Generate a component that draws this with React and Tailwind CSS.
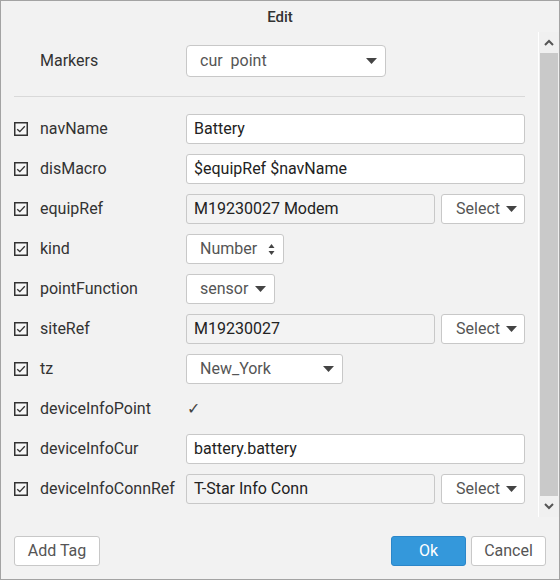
import React from 'react';

const CheckBox = () => (
  <svg width="14" height="14" viewBox="0 0 14 14" className="shrink-0">
    <rect x="0.75" y="0.75" width="12.5" height="12.5" fill="#f7f7f7" stroke="#333" strokeWidth="1.5" />
    <path d="M3.2 7.2 L5.8 9.6 L10.8 4.2" fill="none" stroke="#333" strokeWidth="1.3" />
  </svg>
);

const Caret = () => (
  <svg width="11" height="6" viewBox="0 0 11 6" className="shrink-0">
    <path d="M0 0 L11 0 L5.5 6 Z" fill="#444" />
  </svg>
);

const Spinner = () => (
  <svg width="7" height="13" viewBox="0 0 7 13" className="shrink-0">
    <path d="M0.5 5 L6.5 5 L3.5 1 Z" fill="#444" />
    <path d="M0.5 8 L6.5 8 L3.5 12 Z" fill="#444" />
  </svg>
);

const TextBox = ({ value, readOnly }) => (
  <div className={`flex-1 h-[30px] flex items-center px-[7px] border border-[#c8c8c8] rounded-[3px] text-[16px] text-[#222] ${readOnly ? 'bg-[#f3f3f3]' : 'bg-white'}`}>
    {value}
  </div>
);

const SelectBtn = () => (
  <div className="w-[84px] h-[30px] ml-[6px] flex items-center justify-end gap-[6px] pr-[7px] border border-[#c8c8c8] rounded-[3px] bg-white text-[16px] text-[#555]">
    <span>Select</span>
    <Caret />
  </div>
);

const Dropdown = ({ value, width, icon }) => (
  <div
    className="h-[30px] flex items-center justify-between pl-[13px] pr-[8px] border border-[#c8c8c8] rounded-[3px] bg-white text-[16px] text-[#555]"
    style={{ width }}
  >
    <span>{value}</span>
    {icon === 'spin' ? <Spinner /> : <Caret />}
  </div>
);

const ROWS = [
  { name: 'navName', field: <TextBox value="Battery" /> },
  { name: 'disMacro', field: <TextBox value="$equipRef $navName" /> },
  { name: 'equipRef', field: <><TextBox value="M19230027 Modem" readOnly /><SelectBtn /></> },
  { name: 'kind', field: <Dropdown value="Number" width={98} icon="spin" /> },
  { name: 'pointFunction', field: <Dropdown value="sensor" width={89} /> },
  { name: 'siteRef', field: <><TextBox value="M19230027" readOnly /><SelectBtn /></> },
  { name: 'tz', field: <Dropdown value="New_York" width={157} /> },
  { name: 'deviceInfoPoint', field: <span className="pl-[1px] text-[16px] text-[#444]">✓</span> },
  { name: 'deviceInfoCur', field: <TextBox value="battery.battery" /> },
  { name: 'deviceInfoConnRef', field: <><TextBox value="T-Star Info Conn" readOnly /><SelectBtn /></> },
];

const App = () => {
  return (
    <div
      className="w-[560px] h-[580px] bg-[#f2f2f2] border border-[#a3a3a3] flex flex-col text-[#333]"
      style={{ fontFamily: 'Roboto, "Liberation Sans", sans-serif' }}
    >
      {/* Title */}
      <div className="h-[31px] pt-[2px] flex items-center justify-center text-[15px] font-medium text-[#333]">
        Edit
      </div>

      {/* Body with scrollbar */}
      <div className="h-[485px] flex">
        <div className="flex-1 pl-[13px] pr-[13px]">
          <div className="mt-[13px] h-[32px] flex items-center">
            <span className="w-[172px] pl-[26px] text-[16px] text-[#333]">Markers</span>
            <div className="w-[200px] h-[32px] flex items-center justify-between pl-[13px] pr-[8px] border border-[#c8c8c8] rounded-[4px] bg-white text-[16px] text-[#555]">
              <span>cur&nbsp; point</span>
              <Caret />
            </div>
          </div>
          <div className="mt-[19px] h-px bg-[#d9d9d9]" />
          <div className="mt-[17px] flex flex-col gap-[10px]">
            {ROWS.map((row) => (
              <div key={row.name} className="h-[30px] flex items-center">
                <div className="w-[172px] flex items-center gap-[12px]">
                  <CheckBox />
                  <span className="text-[16px] text-[#333] whitespace-nowrap">{row.name}</span>
                </div>
                <div className="flex-1 flex items-center">{row.field}</div>
              </div>
            ))}
          </div>
        </div>

        {/* Scrollbar */}
        <div className="w-[21px] border-l border-white bg-[#f0f0f0] flex flex-col">
          <div className="h-[21px] flex items-center justify-center">
            <svg width="10" height="7" viewBox="0 0 10 7">
              <path d="M1 6 L5 2 L9 6" fill="none" stroke="#555" strokeWidth="2" />
            </svg>
          </div>
          <div className="flex-1 mx-[1px] bg-[#c9c9c9]" />
          <div className="h-[21px] flex items-center justify-center">
            <svg width="10" height="7" viewBox="0 0 10 7">
              <path d="M1 1 L5 5 L9 1" fill="none" stroke="#555" strokeWidth="2" />
            </svg>
          </div>
        </div>
      </div>

      {/* Footer */}
      <div className="flex-1 flex items-center justify-between px-[13px] pt-[6px]">
        <button className="w-[86px] h-[30px] border border-[#c8c8c8] rounded-[3px] bg-white text-[16px] text-[#555]">
          Add Tag
        </button>
        <div className="flex gap-[5px]">
          <button className="w-[75px] h-[30px] border border-[#2b86c9] rounded-[3px] bg-[#3498db] text-[16px] text-white">
            Ok
          </button>
          <button className="w-[75px] h-[30px] border border-[#c8c8c8] rounded-[3px] bg-white text-[16px] text-[#555]">
            Cancel
          </button>
        </div>
      </div>
    </div>
  );
};

export default App;
